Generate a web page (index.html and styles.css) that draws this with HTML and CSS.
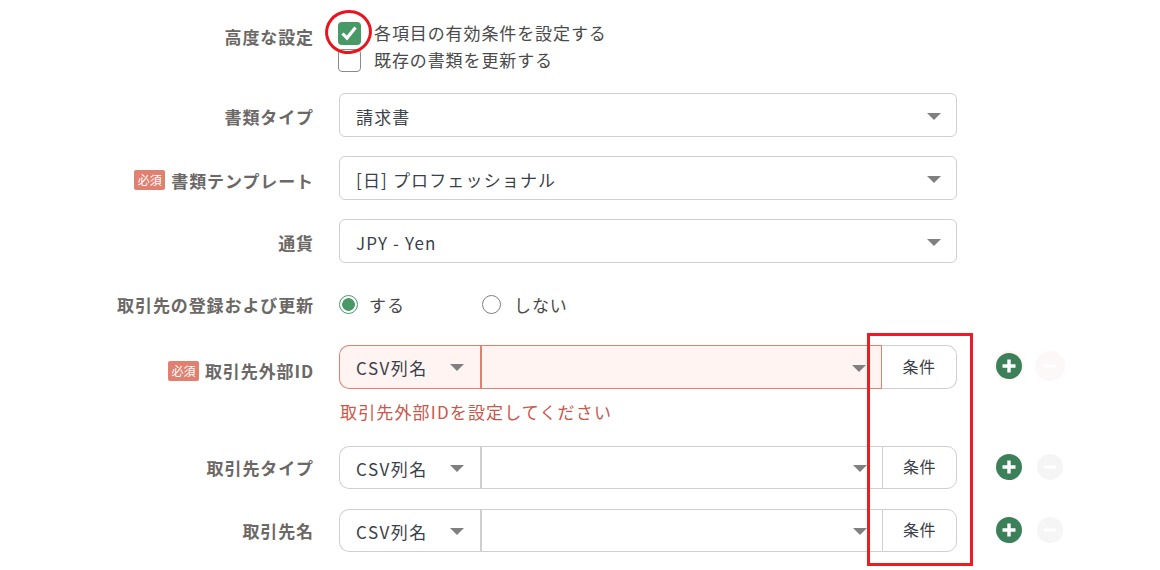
FILE: index.html
```html
<!DOCTYPE html>
<html lang="ja">
<head>
<meta charset="utf-8">
<title>設定</title>
<link rel="stylesheet" href="styles.css">
</head>
<body>
<form class="form">
  <div class="row row-checks">
    <div class="label">高度な設定</div>
    <div class="checks">
      <label class="check"><span class="box box-on"><svg viewBox="0 0 22 22" width="22" height="22"><path d="M4.5 11.5l4.5 4.6L17.5 5.5" fill="none" stroke="#fff" stroke-width="3.2"/></svg></span>各項目の有効条件を設定する</label>
      <label class="check"><span class="box"></span>既存の書類を更新する</label>
    </div>
  </div>
  <div class="row row-select">
    <div class="label label-s">書類タイプ</div>
    <div class="select"><span>請求書</span><i class="caret"></i></div>
  </div>
  <div class="row row-select">
    <div class="label label-m"><span class="req">必須</span>書類テンプレート</div>
    <div class="select"><span>[日] プロフェッショナル</span><i class="caret"></i></div>
  </div>
  <div class="row row-select">
    <div class="label label-s">通貨</div>
    <div class="select"><span>JPY - Yen</span><i class="caret"></i></div>
  </div>
  <div class="row row-radio">
    <div class="label">取引先の登録および更新</div>
    <div class="radios">
      <label class="radio radio-first"><span class="dot dot-on"></span>する</label>
      <label class="radio"><span class="dot"></span>しない</label>
    </div>
  </div>
  <div class="row row-group row-first-group">
    <div class="label label-l"><span class="req">必須</span>取引先外部ID</div>
    <div class="group group-error">
      <div class="g-csv">CSV列名<i class="caret"></i></div>
      <div class="g-val"><i class="caret"></i></div>
      <button type="button" class="g-btn">条件</button>
    </div>
    <div class="ops ops-halo">
      <span class="op op-add"><svg viewBox="0 0 26 26" width="26" height="26"><path d="M13 6.5v13M6.5 13h13" stroke="#fff" stroke-width="3.4"/></svg></span>
      <span class="op op-del"><svg viewBox="0 0 26 26" width="26" height="26"><path d="M7 13h12" stroke="#fff" stroke-width="3"/></svg></span>
    </div>
  </div>
  <div class="error">取引先外部IDを設定してください</div>
  <div class="row row-group row-type">
    <div class="label">取引先タイプ</div>
    <div class="group">
      <div class="g-csv">CSV列名<i class="caret"></i></div>
      <div class="g-val"><i class="caret"></i></div>
      <button type="button" class="g-btn">条件</button>
    </div>
    <div class="ops">
      <span class="op op-add"><svg viewBox="0 0 26 26" width="26" height="26"><path d="M13 6.5v13M6.5 13h13" stroke="#fff" stroke-width="3.4"/></svg></span>
      <span class="op op-del"><svg viewBox="0 0 26 26" width="26" height="26"><path d="M7 13h12" stroke="#fff" stroke-width="3"/></svg></span>
    </div>
  </div>
  <div class="row row-group row-name">
    <div class="label">取引先名</div>
    <div class="group">
      <div class="g-csv">CSV列名<i class="caret"></i></div>
      <div class="g-val"><i class="caret"></i></div>
      <button type="button" class="g-btn">条件</button>
    </div>
    <div class="ops">
      <span class="op op-add"><svg viewBox="0 0 26 26" width="26" height="26"><path d="M13 6.5v13M6.5 13h13" stroke="#fff" stroke-width="3.4"/></svg></span>
      <span class="op op-del"><svg viewBox="0 0 26 26" width="26" height="26"><path d="M7 13h12" stroke="#fff" stroke-width="3"/></svg></span>
    </div>
  </div>
</form>
<div class="mark-circle"></div>
<div class="mark-rect"></div>
</body>
</html>
```

FILE: styles.css
```css
* { box-sizing: border-box; }
html, body { margin: 0; padding: 0; background: #fff; }
body {
  width: 1160px;
  height: 570px;
  overflow: hidden;
  position: relative;
  font-family: "Noto Sans CJK JP", "Noto Sans", sans-serif;
  font-size: 17px;
  letter-spacing: 0.9px;
  color: #3a3f4a;
}
.form { padding-top: 20px; }
.row { display: flex; align-items: center; }
.label {
  width: 314px;
  flex: none;
  margin-right: 25px;
  text-align: right;
  font-weight: 700;
  color: #6b6866;
  white-space: nowrap;
  display: flex;
  justify-content: flex-end;
  align-items: center;
}
.label-s { padding-top: 2px; }
.label-m { padding-top: 4px; }
.label-l { padding-top: 7px; }
.req {
  width: 31px;
  height: 20px;
  margin-right: 6px;
  border-radius: 2px;
  background: #e08070;
  color: #fff;
  font-size: 12px;
  font-weight: 400;
  letter-spacing: 0;
  line-height: 20px;
  text-align: center;
}
.row-checks { height: 53px; margin-bottom: 20px; align-items: flex-start; }
.row-checks .label { margin-top: 4px; }
.checks { display: flex; flex-direction: column; margin-left: -1px; }
.check { display: flex; align-items: center; height: 27px; color: #4a4a4a; line-height: 22px; padding-bottom: 2px; }
.box {
  width: 23px;
  height: 23px;
  margin: 2px 13px 0 0;
  border: 1.5px solid #8a8a8a;
  border-radius: 4px;
  background: #fff;
}
.box-on { border: 0; background: #479a66; display: block; }
.box-on svg { display: block; }
.select {
  width: 618px;
  height: 44px;
  padding: 2px 15px 0 16px;
  border: 1px solid #cfcfcf;
  border-top-width: 1.5px;
  border-radius: 6px;
  display: flex;
  align-items: center;
  justify-content: space-between;
  letter-spacing: 1.15px;
}
.row-select { margin-bottom: 19px; }
.caret {
  flex: none;
  width: 0;
  height: 0;
  border-left: 7px solid transparent;
  border-right: 7px solid transparent;
  border-top: 7px solid #808080;
}
.row-radio { height: 44px; margin-bottom: 19px; }
.radios { display: flex; }
.radio { display: flex; align-items: center; color: #4a4a4a; }
.radio-first { width: 143px; }
.dot {
  width: 19px;
  height: 19px;
  margin-right: 13px;
  border: 1.5px solid #808080;
  border-radius: 50%;
  background: #fff;
}
.dot-on { margin-right: 11px; border-color: #479a66; background: radial-gradient(circle, #479a66 0 6px, #fff 6.6px); }
.group { display: flex; width: 618px; height: 43px; }
.group-error { height: 44px; }
.g-csv, .g-val {
  border: 1px solid #cfcfcf;
  border-right: 0;
  display: flex;
  align-items: center;
  justify-content: space-between;
}
.g-csv {
  width: 141px;
  padding: 1px 16px 0;
  border-radius: 10px 0 0 10px;
  letter-spacing: 1.5px;
}
.g-val {
  width: 402px;
  padding: 2px 15px 0 0;
  border-left: 2px solid #cfcfcf;
  justify-content: flex-end;
}
.g-btn {
  width: 75px;
  height: 100%;
  border: 1px solid #cfcfcf;
  border-radius: 0 10px 10px 0;
  background: #fff;
  font: inherit;
  font-size: 16px;
  letter-spacing: 0.4px;
  color: #3a3f4a;
  padding: 0 0 3px;
}
.group-error .g-csv, .group-error .g-val {
  background: #fff4f2;
  border-color: #e08070;
}
.group-error .g-val { border-right: 1px solid #e08070; }
.group-error .g-btn { border-left-width: 0; }
.ops { display: flex; margin-left: 39px; gap: 15px; align-items: center; margin-top: -2px; }
.op { width: 26px; height: 26px; border-radius: 50%; display: block; }
.op svg { display: block; }
.op-add { background: #3b8058; }
.op-del { background: #f5f5f5; }
.ops-halo .op-add { box-shadow: 0 0 0 2px #fdf6f3; }
.ops-halo .op-del { box-shadow: 0 0 0 2px #fdf8f7; background: #fbf8f7; }
.error {
  margin: 11px 0 0 340px;
  height: 24px;
  line-height: 24px;
  color: #c9574a;
  letter-spacing: 1.15px;
}
.row-type { margin-top: 22px; }
.row-name { margin-top: 20px; }
.mark-circle {
  position: absolute;
  left: 325px;
  top: 10px;
  width: 47px;
  height: 44px;
  border: 3px solid #e8141e;
  border-radius: 50%;
  transform: rotate(-8deg);
}
.mark-rect {
  position: absolute;
  left: 867px;
  top: 333px;
  width: 106px;
  height: 233px;
  border: 3px solid #ed1c24;
}
```
